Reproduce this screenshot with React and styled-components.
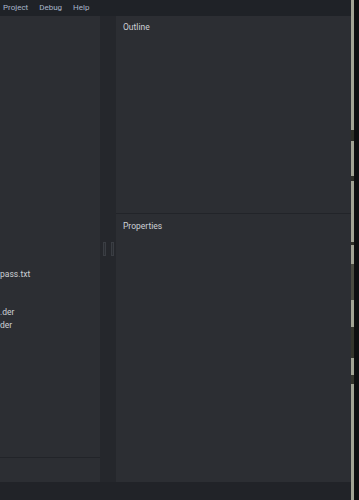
import React from 'react';
import styled, { createGlobalStyle } from 'styled-components';

const GlobalStyle = createGlobalStyle`
  html, body {
    margin: 0;
    padding: 0;
    background: #212328;
  }
  body {
    font-family: Roboto, 'Noto Sans', sans-serif;
  }
`;

const menuItems = ['Project', 'Debug', 'Help'];

const treeRows = [
  { name: 'pass.txt' },
  { name: '' },
  { name: '' },
  { name: '.der' },
  { name: 'der' },
];

const App = () => (
  <>
    <GlobalStyle />
    <Screen>
      <Main>
        <MenuBar>
          {menuItems.map((item) => (
            <MenuItem key={item}>{item}</MenuItem>
          ))}
        </MenuBar>

        <Workspace>
          <LeftPanel>
            <TreeArea>
              <Tree>
                {treeRows.map((row, i) => (
                  <TreeRow key={i}>{row.name}</TreeRow>
                ))}
              </Tree>
            </TreeArea>
            <FilterBox />
          </LeftPanel>

          <Splitter>
            <Grip />
            <Grip />
          </Splitter>

          <RightPanel>
            <OutlineSection>
              <SectionTitle>Outline</SectionTitle>
            </OutlineSection>
            <PropertiesSection>
              <SectionTitle>Properties</SectionTitle>
            </PropertiesSection>
          </RightPanel>
        </Workspace>

        <StatusBar />
      </Main>

      <WindowEdge />
    </Screen>
  </>
);

const Screen = styled.div`
  width: 359px;
  height: 500px;
  display: flex;
  overflow: hidden;
  background: #23262b;
`;

const Main = styled.div`
  flex: 1;
  display: flex;
  flex-direction: column;
  min-width: 0;
`;

const MenuBar = styled.div`
  height: 16px;
  flex: none;
  display: flex;
  align-items: center;
  gap: 11px;
  padding-left: 3px;
  background: #1f2227;
`;

const MenuItem = styled.span`
  font-size: 8px;
  line-height: 16px;
  color: #a9b6cb;
`;

const Workspace = styled.div`
  flex: 1;
  display: flex;
  min-height: 0;
`;

const LeftPanel = styled.div`
  width: 100px;
  flex: none;
  display: flex;
  flex-direction: column;
  background: #2c2e33;
`;

const TreeArea = styled.div`
  flex: 1;
  overflow: hidden;
  padding-top: 252px;
  border-bottom: 1px solid #222429;
`;

const Tree = styled.div`
  display: flex;
  flex-direction: column;
`;

const TreeRow = styled.div`
  height: 12.7px;
  line-height: 12.7px;
  font-size: 8.5px;
  color: #cdd1d6;
  white-space: nowrap;
`;

const FilterBox = styled.div`
  height: 24px;
  flex: none;
  background: #2c2e33;
`;

const Splitter = styled.div`
  width: 16px;
  flex: none;
  display: flex;
  align-items: center;
  justify-content: center;
  gap: 5px;
  background: #25272c;
`;

const Grip = styled.div`
  width: 1px;
  height: 12px;
  border: 1px solid #3a3d43;
  background: #2b2e33;
`;

const RightPanel = styled.div`
  width: 235px;
  flex: none;
  display: flex;
  flex-direction: column;
  background: #2c2e33;
`;

const OutlineSection = styled.div`
  height: 198px;
  flex: none;
  box-sizing: border-box;
  padding: 6px 7px;
  border-bottom: 1px solid #222429;
`;

const PropertiesSection = styled.div`
  flex: 1;
  padding: 7px 7px;
`;

const SectionTitle = styled.div`
  font-size: 8.5px;
  line-height: 10px;
  color: #cdd1d6;
`;

const StatusBar = styled.div`
  height: 18px;
  flex: none;
  background: #212328;
`;

const WindowEdge = styled.div`
  width: 8px;
  flex: none;
  display: flex;
  background: #0e0f10;
  &::before {
    content: '';
    width: 3px;
    background: linear-gradient(
      to bottom,
      #a2a494 0px,
      #a2a494 130px,
      #2f3028 130px,
      #2f3028 141px,
      #a2a494 141px,
      #a2a494 176px,
      #2f3028 176px,
      #2f3028 181px,
      #a2a494 181px,
      #a2a494 242px,
      #2f3028 242px,
      #2f3028 245px,
      #a2a494 245px,
      #a2a494 264px,
      #4a4b40 264px,
      #4a4b40 300px,
      #a2a494 300px,
      #a2a494 327px,
      #34352c 327px,
      #34352c 358px,
      #a2a494 358px,
      #a2a494 375px,
      #34352c 375px,
      #34352c 384px,
      #a2a494 384px
    );
  }
`;

export default App;
